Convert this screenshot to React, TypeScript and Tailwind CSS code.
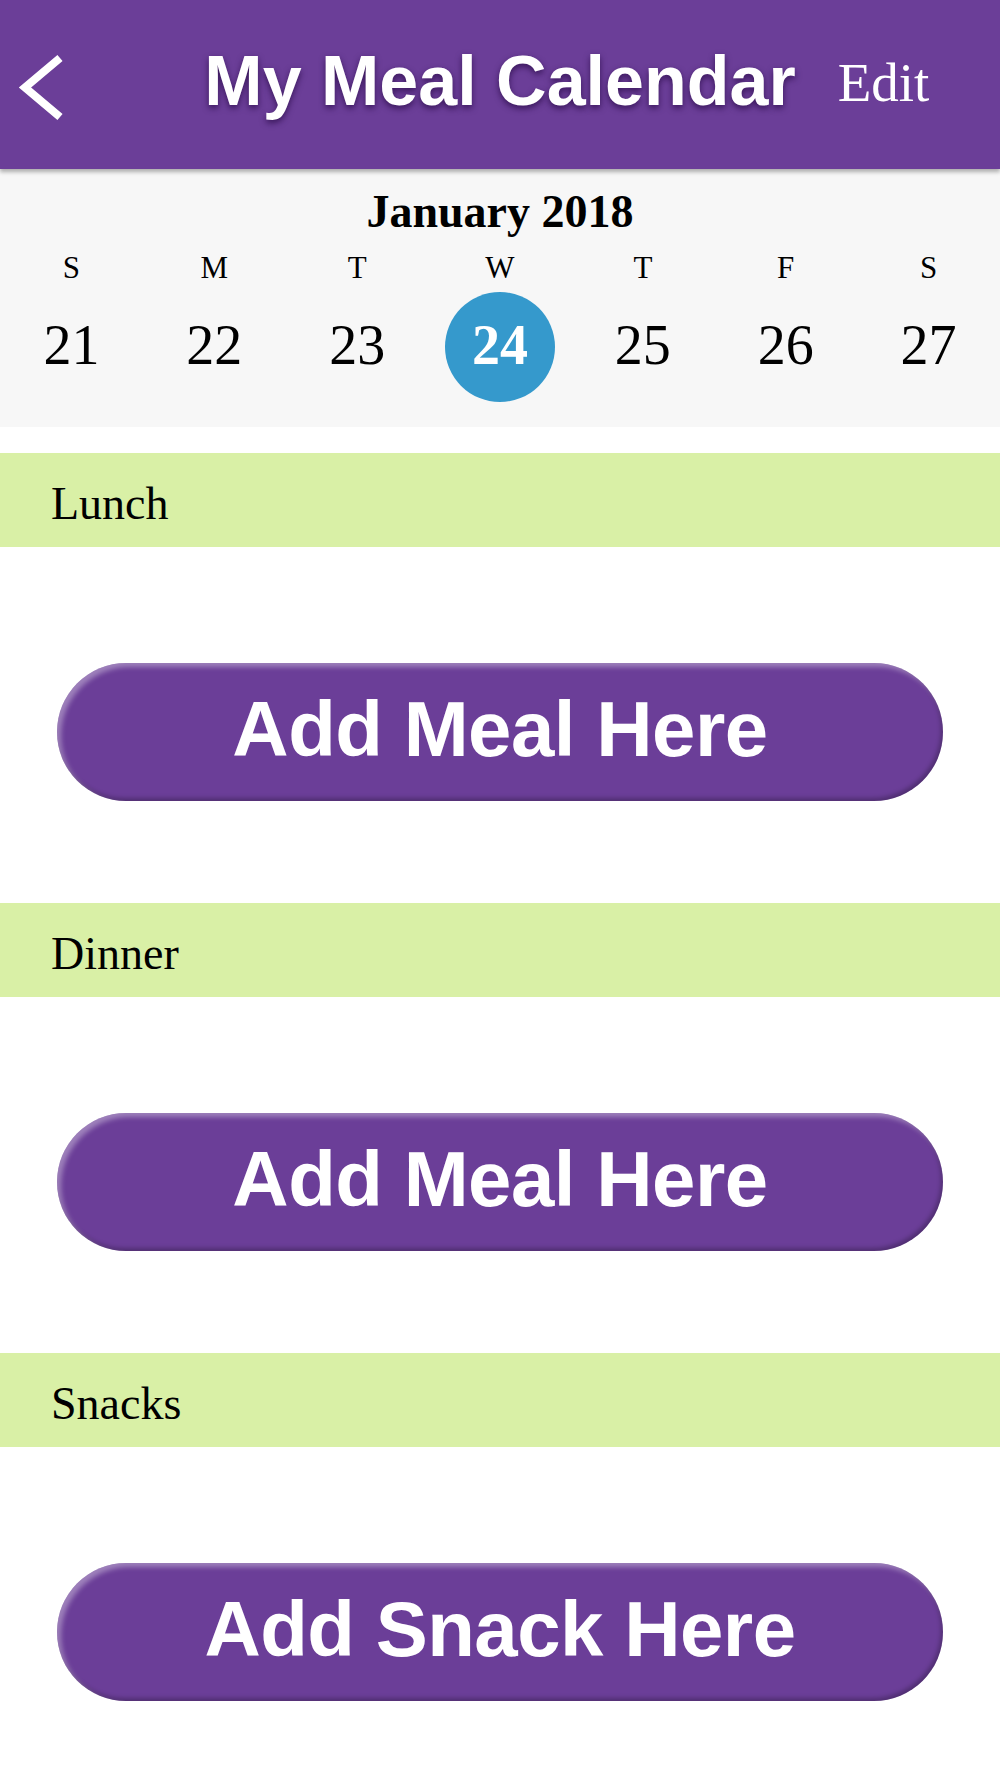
import React from "react";

const DAYS = [
  { letter: "S", num: 21 },
  { letter: "M", num: 22 },
  { letter: "T", num: 23 },
  { letter: "W", num: 24 },
  { letter: "T", num: 25 },
  { letter: "F", num: 26 },
  { letter: "S", num: 27 },
];

const SECTIONS = [
  { title: "Lunch", button: "Add Meal Here" },
  { title: "Dinner", button: "Add Meal Here" },
  { title: "Snacks", button: "Add Snack Here" },
];

const SELECTED = 24;

const serif = "font-['Liberation_Serif','Times_New_Roman',serif]";
const sans = "font-['Liberation_Sans',Arial,sans-serif]";

export default function App() {
  return (
    <div className="min-h-screen w-full bg-white">
      {/* header */}
      <header className="relative z-10 grid h-[169px] grid-cols-[1fr_auto_1fr] items-start bg-[#6b3e98] shadow-[0_3px_4px_rgba(0,0,0,0.3)]">
        <div className="ml-[18px] mt-[51px]">
          <svg width="48" height="72" viewBox="0 0 48 72" fill="none">
            <path
              d="M42 7 L7 36.5 L42 66"
              stroke="white"
              strokeWidth="8"
              strokeLinejoin="miter"
            />
          </svg>
        </div>
        <h1
          className={`${sans} mt-[46px] text-[70px] font-bold leading-[70px] text-white [text-shadow:0_3px_6px_rgba(40,10,70,0.75)]`}
        >
          My Meal Calendar
        </h1>
        <div className="flex">
          <span
            className={`${serif} ml-[42px] mt-[55px] text-[55px] leading-[55px] text-white`}
          >
            Edit
          </span>
        </div>
      </header>

      {/* week strip */}
      <section className="flex h-[258px] flex-col items-center bg-[#f7f7f7] pt-[20px]">
        <h2 className={`${serif} text-[46px] font-bold leading-[46px] text-black`}>
          January 2018
        </h2>
        <div className="mt-[17px] grid w-full grid-cols-7">
          {DAYS.map((d, i) => (
            <div
              key={i}
              className={`${serif} text-center text-[31px] leading-[31px] text-black`}
            >
              {d.letter}
            </div>
          ))}
        </div>
        <div className="mt-[9px] grid w-full grid-cols-7">
          {DAYS.map((d) => (
            <div key={d.num} className="flex h-[110px] items-center justify-center">
              {d.num === SELECTED ? (
                <div className="flex h-[110px] w-[110px] items-center justify-center rounded-full bg-[#3599cc] pb-[4px]">
                  <span className={`${serif} text-[56px] font-bold leading-[56px] text-white`}>
                    {d.num}
                  </span>
                </div>
              ) : (
                <span className={`${serif} pb-[4px] text-[56px] leading-[56px] text-black`}>
                  {d.num}
                </span>
              )}
            </div>
          ))}
        </div>
      </section>

      {/* meal sections */}
      <div className="mt-[26px] flex flex-col">
        {SECTIONS.map((s) => (
          <div key={s.title} className="flex flex-col">
            <div className="flex h-[94px] items-center bg-[#d9f0a6] pl-[51px] pt-[8px]">
              <span className={`${serif} text-[46px] leading-[46px] text-black`}>
                {s.title}
              </span>
            </div>
            <button
              type="button"
              className={`${sans} mx-auto mb-[102px] mt-[116px] flex h-[138px] w-[886px] items-center justify-center rounded-full bg-[#6b3e98] pb-[6px] text-[78px] font-bold leading-[78px] tracking-[-0.5px] text-white shadow-[inset_4px_4px_5px_rgba(255,255,255,0.35),inset_-2px_-3px_4px_rgba(0,0,0,0.25)]`}
            >
              {s.button}
            </button>
          </div>
        ))}
      </div>
    </div>
  );
}
